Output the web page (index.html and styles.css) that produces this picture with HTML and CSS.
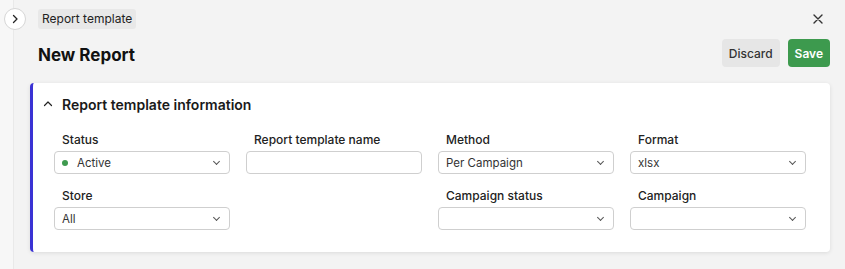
FILE: index.html
```html
<!DOCTYPE html>
<html lang="en">
<head>
    <meta charset="UTF-8">
    <meta name="viewport" content="width=device-width, initial-scale=1.0">
    <title>New Report</title>
    <link rel="stylesheet" href="styles.css">
</head>
<body>
    <div class="layout">
        <aside class="rail">
            <button class="rail-toggle" type="button">
                <svg width="10" height="10" viewBox="0 0 10 10"><path d="M3.5 1.5 L7 5 L3.5 8.5" fill="none" stroke="#222" stroke-width="1.3" stroke-linecap="round" stroke-linejoin="round"/></svg>
            </button>
        </aside>

        <main class="page">
            <div class="topbar">
                <span class="crumb">Report template</span>
                <button class="close" type="button">
                    <svg width="10" height="10" viewBox="0 0 10 10"><path d="M1 1 L9 9 M9 1 L1 9" stroke="#333" stroke-width="1.4" stroke-linecap="round"/></svg>
                </button>
            </div>

            <div class="title-row">
                <h1>New Report</h1>
                <div class="actions">
                    <button class="btn btn-muted" type="button">Discard</button>
                    <button class="btn btn-save" type="button">Save</button>
                </div>
            </div>

            <section class="card">
                <div class="card-head">
                    <svg width="10" height="10" viewBox="0 0 10 10"><path d="M1.5 6.5 L5 3 L8.5 6.5" fill="none" stroke="#222" stroke-width="1.2" stroke-linecap="round" stroke-linejoin="round"/></svg>
                    <h2>Report template information</h2>
                </div>

                <div class="fields">
                    <div class="field">
                        <label>Status</label>
                        <div class="select"><span class="dot"></span><span class="value">Active</span><span class="caret"></span></div>
                    </div>
                    <div class="field">
                        <label>Report template name</label>
                        <div class="select"></div>
                    </div>
                    <div class="field">
                        <label>Method</label>
                        <div class="select"><span class="value">Per Campaign</span><span class="caret"></span></div>
                    </div>
                    <div class="field">
                        <label>Format</label>
                        <div class="select"><span class="value">xlsx</span><span class="caret"></span></div>
                    </div>

                    <div class="field">
                        <label>Store</label>
                        <div class="select"><span class="value">All</span><span class="caret"></span></div>
                    </div>
                    <div class="field"></div>
                    <div class="field">
                        <label>Campaign status</label>
                        <div class="select"><span class="value"></span><span class="caret"></span></div>
                    </div>
                    <div class="field">
                        <label>Campaign</label>
                        <div class="select"><span class="value"></span><span class="caret"></span></div>
                    </div>
                </div>
            </section>
        </main>
    </div>
</body>
</html>
```

FILE: styles.css
```css
body {
    margin: 0;
    font-family: Inter, 'Liberation Sans', Arial, sans-serif;
    background: #f3f3f3;
    color: #1a1a1a;
}

.layout {
    display: flex;
    height: 269px;
}

.rail {
    width: 13px;
    flex-shrink: 0;
    background: #f7f7f7;
    border-right: 1px solid #e9e9e9;
    position: relative;
}

.rail-toggle {
    position: absolute;
    top: 8px;
    left: 4px;
    width: 22px;
    height: 22px;
    box-sizing: border-box;
    border-radius: 50%;
    border: 1px solid #d6d6d6;
    background: #fff;
    padding: 0;
    display: flex;
    align-items: center;
    justify-content: center;
    cursor: pointer;
}

.page {
    flex: 1;
    padding: 9px 15px 0 16px;
}

.topbar {
    display: flex;
    justify-content: space-between;
    align-items: center;
    padding-left: 8px;
}

.crumb {
    background: #e8e8e8;
    border-radius: 3px;
    font-size: 12px;
    padding: 3px 4px;
    line-height: 14px;
    color: #222;
}

.close {
    background: none;
    border: none;
    padding: 0;
    margin-right: 7px;
    display: flex;
    cursor: pointer;
}

.title-row {
    display: flex;
    justify-content: space-between;
    align-items: center;
    padding-left: 8px;
    margin-top: 10px;
}

h1 {
    font-size: 17px;
    font-weight: 700;
    margin: 0;
    padding-top: 3px;
    color: #111;
}

.actions {
    display: flex;
    gap: 8px;
}

.btn {
    font-family: inherit;
    font-size: 12px;
    font-weight: 600;
    border: none;
    border-radius: 4px;
    height: 28px;
    padding: 0 7px;
    cursor: pointer;
}

.btn-muted {
    background: #e6e6e6;
    color: #333;
    font-weight: 500;
}

.btn-save {
    background: #3d9a4e;
    color: #fff;
}

.card {
    margin-top: 16px;
    background: #fff;
    border-left: 3px solid #3a32d4;
    border-radius: 4px;
    box-shadow: 0 1px 4px rgba(0, 0, 0, 0.1);
    padding: 0 21px 22px 21px;
}

.card-head {
    display: flex;
    align-items: center;
    gap: 9px;
    height: 42px;
    margin-left: -11px;
}

.card-head h2 {
    font-size: 14px;
    font-weight: 600;
    margin: 0;
}

.fields {
    display: grid;
    grid-template-columns: repeat(4, 176px);
    column-gap: 16px;
    row-gap: 15px;
    margin-top: 8px;
}

.field label {
    display: block;
    font-size: 12px;
    font-weight: 500;
    color: #222;
    padding-left: 8px;
    margin-bottom: 4px;
    line-height: 14px;
}

.select {
    height: 23px;
    box-sizing: border-box;
    border: 1px solid #cfcfcf;
    border-radius: 4px;
    display: flex;
    align-items: center;
    padding: 0 7px;
    font-size: 11.5px;
    color: #333;
}

.value {
    flex: 1;
}

.dot {
    width: 6px;
    height: 6px;
    border-radius: 50%;
    background: #3e9a4f;
    margin-right: 9px;
}

.caret {
    width: 4px;
    height: 4px;
    border-right: 1.2px solid #555;
    border-bottom: 1.2px solid #555;
    transform: rotate(45deg);
    margin: 0 3px 3px 0;
}
```
